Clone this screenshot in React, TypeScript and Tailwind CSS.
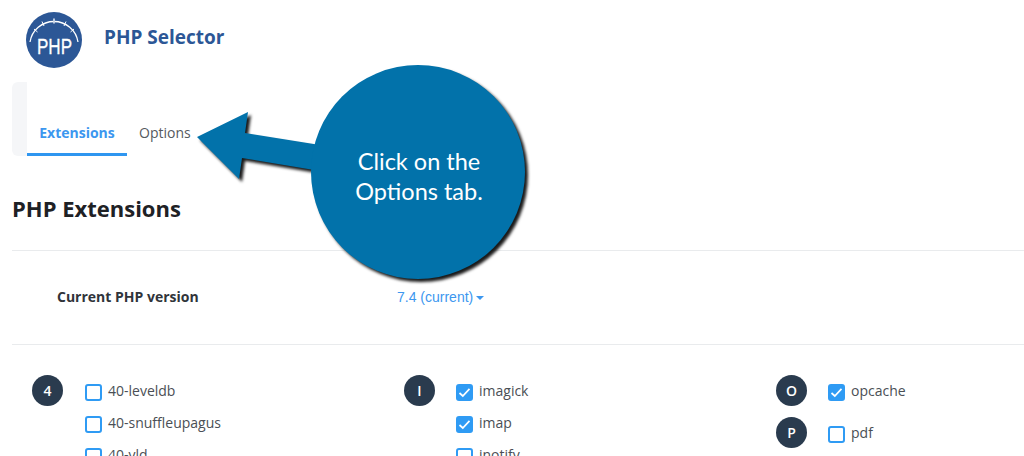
const font = "font-['Open_Sans',sans-serif]";

function PhpLogo() {
  return (
    <svg width="56" height="56" viewBox="0 0 56 56" className="shrink-0">
      <circle cx="28" cy="28" r="28" fill="#2c5796" />
      <path d="M4 30 A 24.3 24.3 0 0 1 52 30" fill="none" stroke="#fff" strokeWidth="1.3" />
      <path d="M28 6.5 V11.5" stroke="#c9d5e6" strokeWidth="1.8" />
      <path d="M16 9.5 L18 14 M8 17 L11.5 20 M40 9.5 L38 14 M48 17 L44.5 20" stroke="#fff" strokeWidth="1" />
      <text x="28.5" y="42" textAnchor="middle" fill="#fff" stroke="#fff" strokeWidth="0.3" fontSize="22" fontFamily="Liberation Sans, sans-serif" textLength="35" lengthAdjust="spacingAndGlyphs">
        PHP
      </text>
    </svg>
  );
}

function Check({ label, checked }: { label: string; checked?: boolean }) {
  return (
    <div className="flex h-[32px] items-start">
      <span
        className={
          "mt-[9px] flex h-[17px] w-[17px] shrink-0 items-center justify-center rounded-[3px] border-2 border-[#2f9bf4] " +
          (checked ? "bg-[#2f9bf4]" : "bg-white")
        }
      >
        {checked && (
          <svg width="13" height="11" viewBox="0 0 13 11">
            <path d="M1.5 6 L4.8 9 L11.5 1.8" fill="none" stroke="#fff" strokeWidth="1.7" />
          </svg>
        )}
      </span>
      <span className="ml-[6px] mt-[6px] text-[14px] leading-[19px] text-[#4a4f55]">{label}</span>
    </div>
  );
}

function Group({ letter, items, listClass }: { letter: string; items: [string, boolean?][]; listClass: string }) {
  return (
    <div className="flex items-start">
      <span className="flex h-[31px] w-[31px] shrink-0 items-center justify-center rounded-full bg-[#2a3b4e] text-[14px] font-semibold text-white">
        {letter}
      </span>
      <div className={listClass}>
        {items.map(([label, checked]) => (
          <Check key={label} label={label} checked={checked} />
        ))}
      </div>
    </div>
  );
}

function Callout() {
  return (
    <div className="absolute left-[190px] top-[60px] h-[230px] w-[345px]">
      <svg width="345" height="230" viewBox="190 60 345 230" className="drop-shadow-[3px_3px_1.5px_rgba(0,0,0,0.9)]">
        <path d="M197 137 L248 112 L245 133 L320 145 L320 171 L242 158 L239 179 Z" fill="#0272aa" />
        <circle cx="418" cy="172" r="107" fill="#0272aa" />
      </svg>
      <div className="absolute left-[129px] top-[86px] w-[200px] text-center font-['Lato',sans-serif] text-[23.5px] leading-[30px] text-white">
        Click on the
        <br />
        Options tab.
      </div>
    </div>
  );
}

export default function App() {
  return (
    <div className={"relative h-[456px] w-[1024px] overflow-hidden bg-white " + font}>
      <header className="flex h-[82px] items-start pl-[26px] pt-[12px]">
        <PhpLogo />
        <h1 className="ml-[22px] mt-[12px] text-[19px] font-bold leading-[26px] text-[#2c5796]">PHP Selector</h1>
      </header>

      <nav className="ml-[12px] flex h-[74px] items-end">
        <div className="h-full w-[15px] rounded-l-[6px] bg-[#f5f6f8]" />
        <div className="flex h-[45px] w-[100px] items-start justify-center border-b-[3px] border-[#2f96f0] pt-[12px] text-[14px] font-bold leading-[19px] text-[#3c97ef]">
          Extensions
        </div>
        <div className="ml-[12px] h-[45px] pt-[12px] text-[14px] leading-[19px] text-[#555a60]">Options</div>
      </nav>

      <div className="ml-[12px]">
        <h2 className="mt-[37px] text-[22px] font-bold leading-[30px] text-[#1e2125]">PHP Extensions</h2>
        <div className="mt-[27px] border-t border-[#e9ebed]" />
        <div className="flex h-[93px] items-center pl-[45px]">
          <span className="mb-[2px] w-[340px] text-[14px] font-bold text-[#30343a]">Current PHP version</span>
          <span className="flex items-center gap-[3px] font-['Liberation_Sans',sans-serif] text-[14px] text-[#3c97ef]">
            7.4 (current)
            <span className="mt-[1px] h-0 w-0 border-x-[4px] border-t-[4px] border-x-transparent border-t-[#3c97ef]" />
          </span>
        </div>
        <div className="border-t border-[#e9ebed]" />
      </div>

      <div className="ml-[32px] mt-[30px] grid grid-cols-[372px_372px_1fr]">
        <Group letter="4" listClass="ml-[22px]" items={[["40-leveldb"], ["40-snuffleupagus"], ["40-vld"]]} />
        <Group letter="I" listClass="ml-[21px]" items={[["imagick", true], ["imap", true], ["inotify"]]} />
        <div className="flex flex-col gap-[10px]">
          <Group letter="O" listClass="ml-[21px]" items={[["opcache", true]]} />
          <Group letter="P" listClass="ml-[21px]" items={[["pdf"]]} />
        </div>
      </div>

      <Callout />
    </div>
  );
}
